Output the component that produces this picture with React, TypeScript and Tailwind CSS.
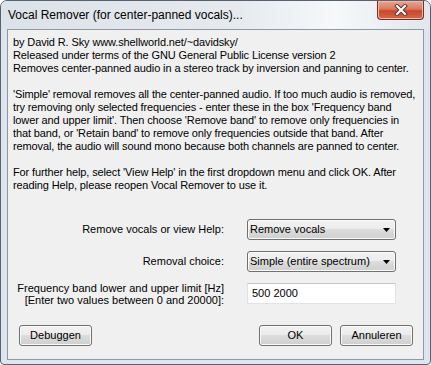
import React from "react";

const btn =
  "flex h-[21px] w-[73px] items-center justify-center rounded-[3px] border border-[#707070] bg-[linear-gradient(#f2f2f2_0%,#ebebeb_50%,#dddddd_50%,#cfcfcf_100%)] text-[11px] text-black shadow-[inset_0_0_0_1px_#fbfbfb]";

const combo =
  "flex h-[21px] w-[149px] items-center justify-between rounded-[3px] border border-[#707070] bg-[linear-gradient(#f2f2f2_0%,#ebebeb_50%,#dddddd_50%,#cfcfcf_100%)] pl-[2px] pr-[5px] text-[11px] text-black shadow-[inset_0_0_0_1px_#fbfbfb]";

function Arrow() {
  return (
    <svg width="7" height="4" viewBox="0 0 7 4">
      <path d="M0 0h7L3.5 4z" fill="#000" />
    </svg>
  );
}

function CloseButton() {
  return (
    <div className="absolute left-[376px] top-0 flex h-[19px] w-[47px] items-center justify-center rounded-b-[4px] border border-t-0 border-[#7a2e22] bg-[linear-gradient(#e9a895_0%,#d9775f_45%,#c6472c_55%,#d5694c_100%)] shadow-[inset_0_0_0_1px_#f0b8a8]">
      <svg width="14" height="12" viewBox="0 0 14 12">
        <path d="M3 2l8 8M11 2l-8 8" stroke="#5a3a34" strokeWidth="4" strokeLinecap="square" />
        <path d="M3 2l8 8M11 2l-8 8" stroke="#ffffff" strokeWidth="2" strokeLinecap="square" />
      </svg>
    </div>
  );
}

export default function App() {
  return (
    <div className="h-[365px] w-[431px] bg-white font-['Liberation_Sans',Arial,sans-serif]">
      <div className="relative flex h-full flex-col rounded-t-[7px] rounded-b-[4px] border border-[#56626f] bg-[#dfe5ec]">
        {/* Title bar */}
        <div className="flex h-[28px] items-center rounded-t-[6px] bg-[linear-gradient(to_right,#dce2e9_0%,#e6eaef_55%,#f6f8fa_78%,#e2e7ed_100%)] pl-[7px] text-[12px] text-black">
          Vocal Remover (for center-panned vocals)...
        </div>
        <CloseButton />

        {/* Client area */}
        <div className="mx-[6px] mb-[4px] flex h-[331px] flex-col border border-[#8e99a5] bg-[#f0f0f0]">
          <div className="whitespace-nowrap pl-[5px] pt-[6px] text-[11px] leading-[13px] tracking-[-0.12px] text-black">
            by David R. Sky www.shellworld.net/~davidsky/
            <br />
            Released under terms of the GNU General Public License version 2
            <br />
            Removes center-panned audio in a stereo track by inversion and panning to center.
            <br />
            <br />
            'Simple' removal removes all the center-panned audio. If too much audio is removed,
            <br />
            try removing only selected frequencies - enter these in the box 'Frequency band
            <br />
            lower and upper limit'. Then choose 'Remove band' to remove only frequencies in
            <br />
            that band, or 'Retain band' to remove only frequencies outside that band. After
            <br />
            removal, the audio will sound mono because both channels are panned to center.
            <br />
            <br />
            For further help, select 'View Help' in the first dropdown menu and click OK. After
            <br />
            reading Help, please reopen Vocal Remover to use it.
          </div>

          {/* Form rows */}
          <div className="mt-[27px] flex flex-col gap-[11px] text-[11px] text-black">
            <div className="flex h-[21px] items-center gap-[23px]">
              <div className="w-[216px] text-right">Remove vocals or view Help:</div>
              <div className={combo}>
                <span>Remove vocals</span>
                <Arrow />
              </div>
            </div>
            <div className="flex h-[21px] items-center gap-[23px]">
              <div className="w-[216px] text-right">Removal choice:</div>
              <div className={combo}>
                <span>Simple (entire spectrum)</span>
                <Arrow />
              </div>
            </div>
            <div className="flex h-[21px] items-center gap-[23px]">
              <div className="w-[216px] whitespace-nowrap text-right leading-[12px]">
                Frequency band lower and upper limit [Hz]
                <br />
                [Enter two values between 0 and 20000]:
              </div>
              <div className="flex h-[21px] w-[149px] items-center border border-[#dfe3e8] border-t-[#c2c6cc] bg-white pl-[4px]">
                500 2000
              </div>
            </div>
          </div>

          {/* Buttons */}
          <div className="mt-[21px] flex items-center pl-[11px] pr-[10px]">
            <button className={btn}>Debuggen</button>
            <div className="ml-auto flex gap-[8px]">
              <button className={btn}>OK</button>
              <button className={btn}>Annuleren</button>
            </div>
          </div>
        </div>
      </div>
    </div>
  );
}
